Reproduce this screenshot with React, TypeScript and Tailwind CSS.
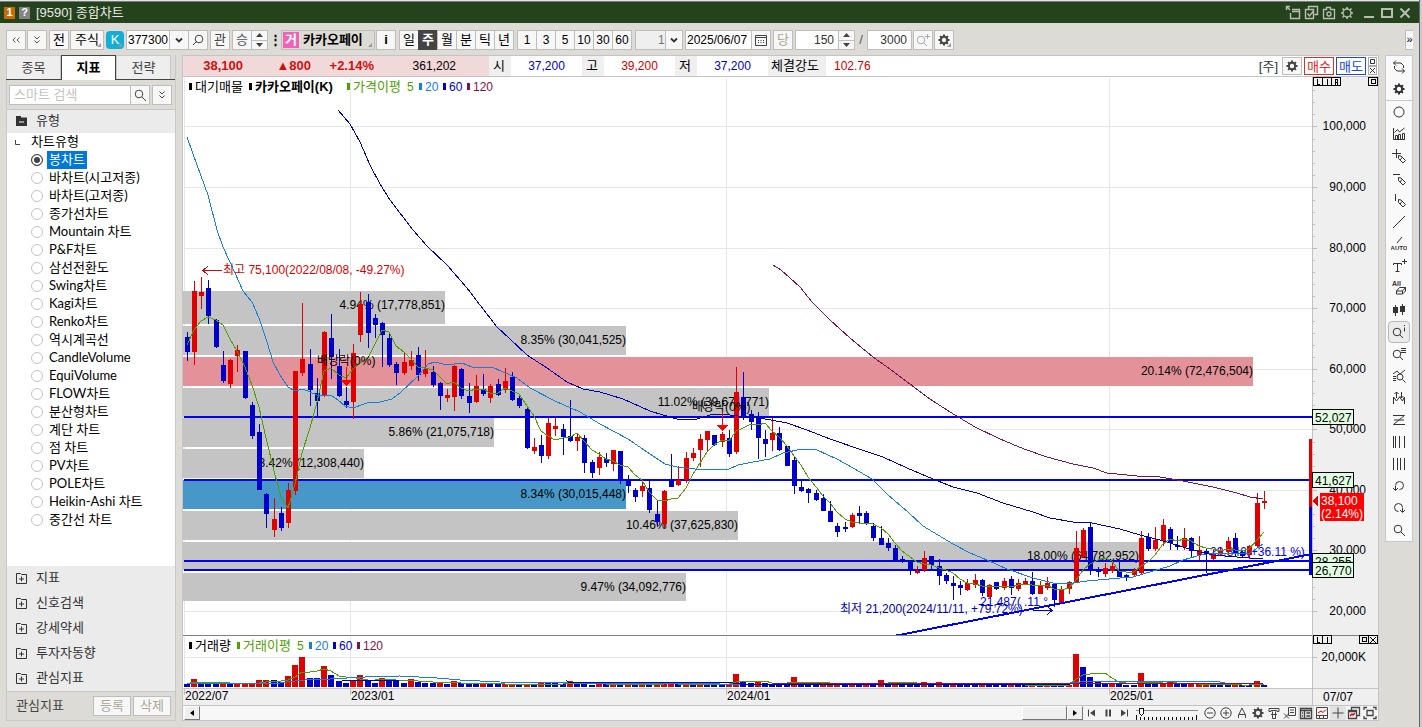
import React from "react";

type Candle = [number, number, number, number, number];

// index-ordered [up, high, bodyTop, bodyBottom, low] in thirds of a unit, grouped by vertical origin
const GROUPS: { base: number; rows: Candle[] }[] = [
  {
    base: 230,
    rows: [
      [0, 306, 321, 366, 392], [1, 153, 183, 366, 405], [1, 141, 186, 198, 237], [0, 150, 174, 258, 282],
      [0, 268, 270, 351, 354], [0, 363, 405, 453, 459], [1, 387, 390, 462, 474], [1, 345, 360, 378, 426],
      [0, 363, 363, 504, 507], [0, 516, 525, 618, 627], [0, 582, 606, 780, 780], [0, 789, 792, 852, 894],
      [1, 804, 867, 900, 921], [0, 831, 849, 894, 903], [1, 759, 780, 879, 894], [1, 423, 423, 783, 795],
      [1, 219, 387, 429, 438], [0, 357, 402, 480, 528], [0, 444, 489, 513, 558], [1, 303, 306, 495, 501],
      [0, 252, 324, 381, 447], [0, 357, 408, 498, 501], [0, 471, 513, 525, 534], [1, 342, 369, 516, 567],
      [1, 186, 222, 315, 336], [0, 192, 216, 309, 354], [0, 252, 264, 285, 324], [0, 276, 279, 315, 411],
      [0, 309, 324, 405, 411], [0, 396, 402, 429, 465], [1, 366, 396, 429, 435], [1, 363, 390, 408, 420],
      [0, 351, 375, 435, 453], [1, 360, 417, 432, 441], [0, 408, 426, 465, 471], [0, 456, 459, 498, 540],
      [1, 477, 495, 504, 516], [1, 405, 408, 501, 543], [0, 414, 417, 498, 507], [0, 459, 498, 519, 549],
      [1, 435, 468, 516, 519], [0, 432, 477, 492, 498], [1, 462, 468, 504, 519], [0, 447, 462, 495, 498],
    ],
  },
  {
    base: 330,
    rows: [
      [1, 114, 153, 180, 189], [0, 126, 141, 210, 213], [0, 192, 204, 228, 234], [0, 228, 237, 354, 357],
      [1, 324, 351, 363, 372], [0, 315, 345, 378, 399], [1, 264, 279, 378, 387], [1, 264, 288, 297, 318],
      [0, 282, 297, 321, 375], [0, 210, 318, 333, 336], [1, 309, 321, 333, 363], [0, 315, 324, 399, 429],
      [0, 390, 396, 429, 444], [1, 366, 381, 414, 435], [0, 369, 387, 399, 411], [1, 360, 360, 402, 423],
      [0, 363, 363, 450, 462], [0, 435, 450, 468, 489], [0, 474, 480, 501, 516], [1, 453, 468, 483, 501],
      [0, 453, 474, 540, 549], [0, 513, 552, 576, 591], [1, 480, 483, 582, 594], [0, 372, 450, 471, 471],
      [1, 408, 450, 465, 468], [1, 366, 384, 450, 459], [1, 354, 369, 384, 393], [1, 312, 327, 360, 411],
      [1, 303, 303, 330, 366], [0, 315, 315, 345, 348], [1, 306, 312, 336, 351], [0, 300, 324, 372, 381],
      [1, 111, 186, 366, 372], [0, 126, 201, 261, 270], [0, 240, 252, 276, 300], [0, 246, 261, 324, 387],
      [0, 300, 327, 342, 381], [1, 264, 309, 330, 363], [0, 291, 309, 360, 363], [0, 348, 348, 408, 408],
      [0, 381, 390, 468, 492], [0, 450, 471, 483, 486], [0, 474, 477, 489, 519], [0, 480, 489, 510, 513],
      [0, 492, 504, 543, 543],
    ],
  },
  {
    base: 450,
    rows: [
      [0, 153, 183, 216, 216], [0, 219, 228, 246, 261], [0, 216, 231, 237, 246], [1, 189, 195, 231, 234],
      [0, 168, 189, 198, 219], [0, 183, 189, 222, 225], [0, 219, 228, 264, 273], [0, 228, 264, 285, 285],
      [0, 264, 279, 294, 303], [0, 285, 294, 330, 333], [0, 318, 327, 336, 339], [0, 333, 333, 360, 375],
      [1, 348, 363, 367, 372], [1, 303, 324, 360, 366], [0, 318, 318, 345, 357], [0, 327, 348, 378, 405],
      [0, 369, 375, 393, 402], [0, 378, 399, 408, 450], [0, 393, 405, 414, 435], [1, 387, 399, 420, 423],
      [1, 372, 390, 405, 414], [0, 387, 390, 429, 438], [1, 402, 405, 441, 441], [0, 396, 396, 417, 420],
      [1, 384, 393, 414, 420], [0, 378, 387, 414, 435], [1, 387, 399, 417, 423], [1, 384, 393, 402, 405],
      [0, 366, 393, 432, 435], [1, 393, 408, 432, 432], [1, 381, 399, 414, 420], [0, 402, 402, 450, 471],
      [1, 408, 417, 459, 459], [1, 393, 396, 417, 432], [1, 243, 294, 396, 399], [1, 234, 240, 321, 324],
      [0, 219, 231, 360, 375], [0, 351, 360, 366, 381], [1, 339, 354, 372, 381], [1, 339, 348, 363, 369],
    ],
  },
  {
    base: 430,
    rows: [
      [0, 396, 420, 441, 441], [0, 432, 435, 441, 453], [1, 414, 420, 435, 441], [1, 303, 324, 429, 432],
      [0, 309, 321, 357, 363], [1, 291, 330, 357, 363], [1, 267, 285, 333, 348], [0, 291, 297, 339, 360],
      [0, 318, 345, 351, 360], [1, 294, 324, 351, 360], [0, 321, 324, 363, 381], [1, 318, 360, 375, 390],
      [0, 357, 363, 366, 429], [1, 360, 369, 387, 390], [1, 354, 360, 372, 378], [1, 321, 333, 366, 372],
      [0, 309, 324, 369, 378], [0, 363, 366, 378, 384], [1, 345, 348, 375, 387], [1, 189, 219, 348, 351],
      [1, 183, 213, 219, 237],
    ],
  },
];

const CANDLES = GROUPS.flatMap((g) =>
  g.rows.map(([up, h, t, b, l]) => ({
    up: up === 1,
    h: Math.round(g.base + h / 3),
    t: Math.round(g.base + t / 3),
    b: Math.round(g.base + b / 3),
    l: Math.round(g.base + l / 3),
  }))
);
const cx = (i: number) => Math.floor(187.3 + 7.228 * i);

const VOLUME: number[] = [
  3, 8, 4.3, 4.2, 3, 4, 3, 3.6, 3.8, 4, 7, 7.1, 7, 5, 11, 22, 30, 9, 8.9, 21, 12, 6, 4, 7, 12, 7, 4, 9.5, 7, 6,
  4, 8, 5.5, 4.5, 4, 5, 3.5, 6, 4, 3.9, 3.8, 4.5, 3, 2.8, 3, 3.1, 2.6, 3.2, 2.5, 4, 3.8, 3.6, 3.2, 6, 4, 3.8, 2.5, 3.5,
  2.6, 2.7, 2.6, 2.8, 2.7, 3.2, 3, 3.4, 3.5, 4.8, 2.7, 3, 2.9, 3.1, 3, 2.8, 2.7, 3.3, 13, 6, 4, 5, 3.6, 3.2, 3, 2.9,
  10, 5, 4.5, 2.6, 3, 3.2, 3.4, 2.8, 3.9, 3.2, 3.8, 3.6, 7, 4.5, 5, 4.4, 4, 3.9, 5, 4, 5, 3, 4, 3.6, 3.4, 2, 3,
  2.6, 2.5, 2.4, 3, 2.2, 2, 2.3, 2.1, 2.4, 2.2, 2, 2.5, 33, 20, 10, 5.6, 3.6, 3.9, 3, 2, 1.9, 14, 4, 3, 4, 5,
  3, 2.6, 3.2, 3.4, 3.6, 3, 2, 1.9, 2.5, 2, 1.9, 6, 2,
];

const avg = (a: number[]) => a.reduce((s, v) => s + v, 0) / a.length;
const CLOSES = CANDLES.map((c) => (c.up ? c.t : c.b));
const MA5 = "187,345 194,330 201,321 208,317 " +
  CLOSES.map((_, i) => (i < 4 ? "" : `${cx(i)},${Math.round(avg(CLOSES.slice(i - 4, i + 1)))}`)).join(" ");
const VMA5 = VOLUME.map((_, i) => `${cx(i)},${Math.round(687 - avg(VOLUME.slice(Math.max(0, i - 4), i + 1)))}`).join(" ");

const MA20 =
  "187,137 197,165 208,195 217,230 223,247 235,273 243,291 252,302 259,318 267,342 273,362 280,375 288,387 295,391 303,389 317,395 332,396 338,400 345,406 353,408 367,403 380,402 392,399 400,393 418,376 428,364 435,362 447,365 462,363 472,367 483,368 492,367 503,372 517,378 530,388 555,401 580,412 600,424 628,439 647,452 665,464 677,467 695,469 729,469 738,465 753,462 770,459 783,453 802,449 817,450 828,455 837,459 853,468 872,479 888,495 908,512 923,526 938,535 953,544 970,553 987,560 1007,569 1033,578 1053,583 1067,584 1087,581 1120,578 1133,577 1143,574 1170,566 1183,560 1197,556 1210,553 1250,553 1263,544";
const MA60 =
  "338,110 344,117 350,124 360,142 370,165 380,184 390,200 400,213 413,230 427,246 447,265 467,288 480,305 497,327 510,339 527,355 547,368 567,382 583,389 600,392 623,399 650,411 663,415 677,419 697,419 710,415 723,414 745,417 760,418 787,423 807,430 830,439 862,450 883,457 907,468 933,479 953,487 977,493 1003,503 1033,512 1050,518 1073,522 1092,523 1120,529 1140,535 1160,540 1183,547 1200,552 1213,555 1237,557 1263,559";
const MA120 =
  "773,265 781,270 790,278 800,287 812,302 830,320 850,338 873,357 890,369 910,384 930,399 950,412 975,427 1000,439 1024,449 1047,457 1073,464 1093,468 1107,473 1137,476 1160,477 1183,481 1213,487 1237,493 1250,497 1263,499";

const PROFILE = [
  { y: 291, h: 33, x: 445, label: "4.94% (17,778,851)", fill: "fill-[#c4c4c4]" },
  { y: 326, h: 29, x: 626, label: "8.35% (30,041,525)", fill: "fill-[#c4c4c4]" },
  { y: 357, h: 29, x: 1253, label: "20.14% (72,476,504)", fill: "fill-[#e4929a]" },
  { y: 388, h: 29, x: 769, label: "11.02% (39,671,771)", fill: "fill-[#c4c4c4]" },
  { y: 418, h: 29, x: 494, label: "5.86% (21,075,718)", fill: "fill-[#c4c4c4]" },
  { y: 449, h: 29, x: 364, label: "3.42% (12,308,440)", fill: "fill-[#c4c4c4]" },
  { y: 480, h: 29, x: 626, label: "8.34% (30,015,448)", fill: "fill-[#4798c8]" },
  { y: 511, h: 29, x: 738, label: "10.46% (37,625,830)", fill: "fill-[#c4c4c4]" },
  { y: 542, h: 28, x: 1139, label: "18.00% (64,782,952)", fill: "fill-[#c4c4c4]" },
  { y: 573, h: 28, x: 686, label: "9.47% (34,092,776)", fill: "fill-[#c4c4c4]" },
];

const PRICES: [number, string][] = [
  [126, "100,000"], [187, "90,000"], [248, "80,000"], [308, "70,000"], [369, "60,000"],
  [429, "50,000"], [490, "40,000"], [550, "30,000"], [611, "20,000"],
];
const MONTHS: [number, string][] = [[184, "2022/07"], [350, "2023/01"], [726, "2024/01"], [1109, "2025/01"]];

function Legend({ y, first, name, ma, xs }: { y: number; first: string; name?: string; ma: string; xs: number[] }) {
  const [a, b, c, d, e, f] = xs;
  return (
    <g>
      {[[a, "fill-black"], [c, "fill-[#4f9f00]"], [d, "fill-[#1480d8]"], [e, "fill-[#0000c8]"], [f, "fill-[#7d1350]"]].map(([x, k]) => (
        <rect key={String(x)} x={Number(x)} y={y - 8} width="3" height="7" className={String(k)} />
      ))}
      <text x={a + 6} y={y} className="text-[13px] fill-black">{first}</text>
      {name && (
        <>
          <rect x={b} y={y - 8} width="3" height="7" />
          <text x={b + 6} y={y} className="text-[13px] font-bold fill-black">{name}</text>
        </>
      )}
      <text x={c + 6} y={y} className="text-[13px] fill-[#4f9f00]">{ma}</text>
      <text x={d - 12} y={y} className="fill-[#4f9f00]">5</text>
      <text x={d + 6} y={y} className="fill-[#1480d8]">20</text>
      <text x={e + 6} y={y} className="fill-[#0000c8]">60</text>
      <text x={f + 6} y={y} className="fill-[#7d1350]">120</text>
    </g>
  );
}

const TAG_PATHS: Record<string, string> = {
  L: "M4 2v5h3",
  I: "M5 2v6",
  R: "M4 8V2.5h2.5v2.5H4M6.5 5v3",
  box: "M3 2.5h4v4H3z",
  x: "M2 2l6 6M8 2L2 8",
};
function AxisTag({ x, y, kind }: { x: number; y: number; kind: string }) {
  return (
    <g fill="none" stroke="black">
      <rect x={x + 0.5} y={y + 0.5} width="9" height="8" fill="#efefef" />
      <g transform={`translate(${x} ${y})`}><path d={TAG_PATHS[kind]} /></g>
    </g>
  );
}

function PriceTag({ y, label }: { y: number; label: string }) {
  return (
    <g>
      <rect x="1312.5" y={y - 7.5} width="41" height="15" fill="#e2ffe2" stroke="black" />
      <text x="1315" y={y + 5} className="fill-black">{label}</text>
    </g>
  );
}

function Chart() {
  return (
    <svg
      viewBox="183 77 1195 628"
      className="block h-auto w-full font-['Liberation_Sans','Noto_Sans_CJK_KR',sans-serif] text-[12px]"
      shapeRendering="crispEdges"
      role="img"
      aria-label="카카오페이 주봉 차트"
    >
      <defs>
        <clipPath id="plot"><rect x="183" y="77" width="1129" height="558" /></clipPath>
      </defs>
      <rect x="183" y="77" width="1195" height="628" fill="white" />
      <rect x="1312" y="77" width="66" height="628" fill="#efefef" />
      <rect x="183" y="688" width="1195" height="17" fill="#efefef" />
      {PRICES.map(([y]) => <rect key={y} x="184" y={y} width="1128" height="1" fill="#e6e6e6" />)}
      <rect x="184" y="657" width="1128" height="1" fill="#e6e6e6" />
      {MONTHS.map(([x]) => (
        <g key={x} fill="#e6e6e6">
          <rect x={x} y="78" width="1" height="555" />
          <rect x={x} y="637" width="1" height="50" />
        </g>
      ))}
      {PROFILE.map((p) => (
        <g key={p.y}>
          <rect x="183" y={p.y} width={p.x - 183} height={p.h} className={p.fill} />
          <text x={p.x} y={p.y + 18} textAnchor="end" className="fill-black">{p.label}</text>
        </g>
      ))}
      <g fill="#0000f8">
        {[416, 479, 560, 569].map((y) => <rect key={y} x="184" y={y} width="1128" height="2" />)}
      </g>
      <text x="223" y="274" className="fill-[#d80000]">최고 75,100(2022/08/08, -49.27%)</text>
      <path d="M222 270.5H203M208 266l-5 4.5 5 4.5" fill="none" stroke="#d80000" />
      <text x="840" y="613" className="fill-[#0000b4]">최저 21,200(2024/11/11, +79.72%)</text>
      <path d="M1033 610.5h19M1047 606l5 4.5-5 4.5" fill="none" stroke="#0000b4" />
      <text x="980" y="606" className="fill-[#0000c8]">21,487( .11 °</text>
      <text x="1210" y="556" className="fill-[#0000f0]">29,846(+36.11 %)</text>
      {CANDLES.map((c, i) => (
        <g key={i} fill={c.up ? "#e00000" : "#0000c8"}>
          <rect x={cx(i)} y={c.h} width="1" height={Math.max(1, c.l - c.h)} />
          <rect x={cx(i) - 2} y={c.t} width="5" height={Math.max(2, c.b - c.t)} />
        </g>
      ))}
      <g fill="none" strokeWidth="1" clipPath="url(#plot)">
        <polyline points={MA5} stroke="#4f9f00" />
        <polyline points={MA20} stroke="#1480d8" />
        <polyline points={MA60} stroke="#0000b8" />
        <polyline points={MA120} stroke="#7d1350" />
        <path d="M894 636L1312 554" stroke="#0000f8" strokeWidth="2" />
      </g>
      {[[317, 365, 346, 367, 380], [692, 411, 722, 412, 425]].map(([tx, ty, x, y1, y2]) => (
        <g key={tx}>
          <text x={tx} y={ty} className="fill-black">배당락(0%)</text>
          <path d={`M${x} ${y1}h1V${y2}h5l-5 6h-1l-5-6h5z`} fill="#ff0000" />
        </g>
      ))}
      <rect x="1309" y="439" width="3" height="68" fill="#e00000" />
      <rect x="1309" y="507" width="3" height="68" fill="#0000d8" />
      <Legend y={91} first="대기매물" name="카카오페이(K)" ma="가격이평" xs={[189, 249, 347, 419, 443, 467]} />

      <rect x="183" y="635" width="1195" height="1" fill="#808080" />
      {VOLUME.map((v, i) => (
        <rect
          key={i}
          x={cx(i) - 3}
          y={Math.round(687 - v)}
          width="6"
          height={687 - Math.round(687 - v)}
          fill={i > 0 && v > VOLUME[i - 1] ? "#e00000" : "#0000c8"}
        />
      ))}
      <g fill="none">
        <polyline points={VMA5} stroke="#4f9f00" />
        <polyline points="187,683 280,683 295,681 305,680 330,679 365,677 400,676 437,678 460,680 500,682 580,683 720,684 820,685 900,684 1000,684 1070,683 1090,681 1140,681 1215,681 1225,683 1263,683" stroke="#1480d8" />
        <polyline points="342,681 400,680 566,680 568,682 726,682 740,684 1070,684 1090,683 1263,683" stroke="#0000b8" />
        <polyline points="773,684 900,683 1263,683" stroke="#7d1350" />
      </g>
      <Legend y={650} first="거래량" ma="거래이평" xs={[189, 0, 237, 309, 333, 357]} />
      <rect x="183" y="688" width="1195" height="1" fill="#c4c4c4" />
      <rect x="1312" y="77" width="1" height="628" fill="#c0c0c0" />

      {PRICES.map(([y, t]) => (
        <g key={y}>
          <rect x="1312" y={y} width="5" height="1" fill="#bdbdbd" />
          {[12, 24, 36, 48].map((d) => <rect key={d} x="1312" y={y - d} width="3" height="1" fill="#bdbdbd" />)}
          <text x="1366" y={y + 4} textAnchor="end" className="fill-black">{t}</text>
        </g>
      ))}
      <rect x="1312" y="657" width="5" height="1" fill="#bdbdbd" />
      <text x="1366" y="661" textAnchor="end" className="fill-black">20,000K</text>
      <PriceTag y={417} label="52,027" />
      <PriceTag y={480} label="41,627" />
      <PriceTag y={561} label="28,255" />
      <PriceTag y={570} label="26,770" />
      <path d="M1312 501l6-6v12z" fill="#e00000" />
      <rect x="1320" y="493" width="44" height="28" fill="#ff0000" />
      <text x="1321" y="505" className="fill-white">38,100</text>
      <text x="1321" y="518" className="fill-white">(2.14%)</text>
      <AxisTag x={1313} y={77} kind="L" />
      <AxisTag x={1322} y={77} kind="I" />
      <AxisTag x={1331} y={77} kind="R" />
      <AxisTag x={1368} y={77} kind="box" />
      <AxisTag x={1313} y={635} kind="L" />
      <AxisTag x={1322} y={635} kind="I" />
      <AxisTag x={1359} y={635} kind="box" />
      <AxisTag x={1368} y={635} kind="x" />
      {MONTHS.map(([x, t]) => (
        <g key={x}>
          <rect x={x} y="688" width="1" height="7" fill="#bdbdbd" />
          <text x={x + 1} y="700" className="fill-black">{t}</text>
        </g>
      ))}
      <text x="1323" y="701" className="fill-black">07/07</text>
    </svg>
  );
}

/* ---------- icons, 16 x 16 grid ---------- */
function Ic({ d, f, w = 1, children }: { d?: string; f?: string; w?: number; children?: React.ReactNode }) {
  return (
    <svg viewBox="0 0 16 16" className="size-4 shrink-0" fill="none" stroke="currentColor" strokeWidth={w} aria-hidden="true">
      {d && <path d={d} />}
      {f && <path d={f} fill="currentColor" stroke="none" />}
      {children}
    </svg>
  );
}
const Gear = () => (
  <svg viewBox="0 0 16 16" className="size-4 shrink-0" fill="none" stroke="currentColor" aria-hidden="true">
    <path d="M8 2.5v2M8 11.5v2M2.5 8h2M11.5 8h2M4.1 4.1l1.4 1.4M10.5 10.5l1.4 1.4M11.9 4.1l-1.4 1.4M5.5 10.5l-1.4 1.4" strokeWidth="2" />
    <circle cx="8" cy="8" r="3.2" strokeWidth="2" />
  </svg>
);
const Sun = () => (
  <svg viewBox="0 0 16 16" className="size-4 shrink-0" fill="none" stroke="currentColor" aria-hidden="true">
    <path d="M8 2v2M8 12v2M2 8h2M12 8h2M3.5 3.5l1.5 1.5M11 11l1.5 1.5M12.5 3.5L11 5M5 11l-1.5 1.5" strokeWidth="1.6" />
    <circle cx="8" cy="8" r="4" strokeWidth="1.4" />
  </svg>
);
const Lens = ({ extra }: { extra?: string }) => (
  <Ic d={extra}>
    <circle cx={extra ? 6 : 7} cy={extra ? 8 : 7} r="3.8" />
    <path d={extra ? "M9 11l3 3" : "M10 10l4 4"} />
  </Ic>
);
const Dbl = () => <Ic d="M5.5 4.5L8 7l2.5-2.5M5.5 8.5L8 11l2.5-2.5" />;
const PENCIL = "M7.5 7.5v3l4.5 4.5 2.5-2.5L10 8zM9 12l2.5-3";

const TOOLS: { name: string; icon: React.ReactNode }[] = [
  { name: "원", icon: <Ic><circle cx="8" cy="8" r="5" /></Ic> },
  { name: "지표 차트", icon: <Ic d="M2.5 2v11.5H14M4.5 13V9.5h2V13M7.5 13V8.5h2V13M11.5 13V7.5h2V13M3.5 6.5l3-3 2 2.5 5-4" /> },
  { name: "십자선", icon: <Ic d={"M5.5 1v9M1 5.5h9" + PENCIL} /> },
  { name: "수평선", icon: <Ic d={"M2 4.5h7" + PENCIL} /> },
  { name: "수직선", icon: <Ic d={"M4.5 2v7" + PENCIL} /> },
  { name: "추세선", icon: <Ic d="M2 14L14 2" /> },
  {
    name: "자동 추세선",
    icon: (
      <Ic d="M6 7l5-6">
        <text x="8" y="14" textAnchor="middle" fill="currentColor" stroke="none" className="text-[6px] font-bold">AUTO</text>
      </Ic>
    ),
  },
  { name: "문자", icon: <Ic d="M2.5 7V5.5h8V7M6.5 5.5v8M4.5 13.5h4M13.5 1v5M11 3.5h5" /> },
  {
    name: "전체 지우기",
    icon: (
      <Ic d="M5.5 11l3-3.5h6L11.5 11zM5.5 11v3h6v-3M11.5 14l3-3V7.5">
        <text x="1" y="6" fill="currentColor" stroke="none" className="text-[7px] font-bold">All</text>
      </Ic>
    ),
  },
  { name: "봉", icon: <Ic d="M4.5 3v11M11.5 2v11" f="M2 5h5v6H2zM9 4h5v6H9z" /> },
  { name: "정보 돋보기", icon: <Lens extra="M13.5 1v1M13.5 3.5v4" /> },
  { name: "목록 돋보기", icon: <Lens extra="M10 2.5h5M10 4.5h5M10 6.5h5" /> },
  { name: "차트 돋보기", icon: <Ic d="M2 6l4-3 3 3 5-4M2 8.5h3M2 10.5h3M2 12.5h3M11.5 11.5l3 3M12 9a3 3 0 1 0-6 0 3 3 0 0 0 6 0" /> },
  { name: "신호", icon: <Ic d="M2.5 14V7l3 4 3-4 3 4 2-4v7M5.5 8V2M3.5 4l2-2 2 2M10.5 2v6M8.5 6l2 2 2-2" /> },
  { name: "지그재그", icon: <Ic d="M2 3.5h11.5L2.5 12.5H14M3 8h10" /> },
  { name: "피보나치 시간대", icon: <Ic d="M2.5 2v12M4.5 2v12M8.5 2v12M13.5 2v12" /> },
  { name: "등간격선", icon: <Ic d="M2.5 2v12M6.5 2v12M9.5 2v12M13.5 2v12" /> },
  { name: "되돌리기", icon: <Ic d="M4.5 7.5a4 4 0 1 1 4 4M2 10l2.5 2.5L7 10M4.5 12V8" /> },
  { name: "다시 실행", icon: <Ic d="M11.5 7.5a4 4 0 1 0-4 4M9 10l2.5 2.5L14 10M11.5 12V8" /> },
  { name: "확대", icon: <Lens /> },
];

const BTN = "flex h-5 shrink-0 items-center justify-center border border-[#bdbdb9] bg-[#f7f7f7]";
function B({ w, label, children, c = "" }: { w: string; label?: string; children: React.ReactNode; c?: string }) {
  return <button type="button" aria-label={label} className={`${BTN} ${w} ${c}`}>{children}</button>;
}
function Spinner() {
  return (
    <div className="flex w-4 shrink-0 flex-col border border-l-0 border-[#bdbdb9] bg-[#f7f7f7] text-[#444]">
      <button type="button" aria-label="증가" className="flex h-[9px] items-center justify-center">
        <svg viewBox="0 0 7 4" className="h-1 w-[7px]"><path d="M0 4L3.5 0 7 4z" fill="currentColor" /></svg>
      </button>
      <button type="button" aria-label="감소" className="flex h-[9px] items-center justify-center border-t border-[#bdbdb9]">
        <svg viewBox="0 0 7 4" className="h-1 w-[7px]"><path d="M0 0L3.5 4 7 0z" fill="currentColor" /></svg>
      </button>
    </div>
  );
}
const Corner = () => (
  <svg viewBox="0 0 4 4" className="absolute right-0.5 bottom-0.5 size-1" aria-hidden="true"><path d="M4 0v4H0z" fill="#999" /></svg>
);
const Down = () => <Ic d="M5 6.5L8 9.5l3-3" w={1.8} />;

function TopBar() {
  return (
    <div className="flex h-8 items-center pt-px pl-1.5 text-[13px] leading-none">
      <B w="w-5" label="접기" c="text-[#555]"><span className="rotate-90"><Dbl /></span></B>
      <B w="w-5" c="ml-px text-[#555]" label="더보기"><Dbl /></B>
      <B w="w-5" c="ml-0.5">전</B>
      <B w="w-[34px]" c="relative ml-px">주식<Corner /></B>
      <button type="button" className="relative ml-0.5 flex size-[18px] shrink-0 items-center justify-center rounded-sm bg-[#12aed4] text-white">K<Corner /></button>
      <input aria-label="종목코드" defaultValue="377300" className="ml-0.5 h-5 w-11 shrink-0 border border-[#bdbdb9] bg-white pl-px text-xs" />
      <B w="w-5" c="-ml-px text-[#333]" label="종목 목록"><Down /></B>
      <B w="w-5" c="-ml-px text-[#444]" label="종목 검색"><Ic d="M6.5 9.5L3 13"><circle cx="9" cy="7" r="3.8" /></Ic></B>
      <B w="w-5" c="ml-0.5 text-[#444]">관</B>
      <B w="w-5" c="ml-0.5 text-[#555]">승</B>
      <Spinner />
      <div className="ml-px w-2 text-center font-bold">⋮</div>
      <button type="button" className="relative ml-1 flex h-5 w-[94px] shrink-0 items-center border border-[#bdbdb9] bg-[#dddbd5] pl-px font-bold">
        <span className="mr-1 flex size-4 items-center justify-center bg-[#f062b8] text-white">거</span>카카오페이<Corner />
      </button>
      <B w="w-5" c="ml-px font-bold">i</B>
      <div className="ml-[3px] flex">
        {["일", "주", "월", "분", "틱", "년"].map((t) => (
          <button key={t} type="button" className={`-mr-px flex h-5 w-5 shrink-0 items-center justify-center border ${t === "주" ? "border-[#444] bg-[#444] font-bold text-white" : "border-[#bdbdb9] bg-[#f7f7f7]"}`}>{t}</button>
        ))}
      </div>
      <div className="ml-[3px] flex pl-px text-xs">
        {["1", "3", "5", "10", "30", "60"].map((t) => <B key={t} w="w-5" c="-mr-px">{t}</B>)}
      </div>
      <div className="relative ml-1 h-5 w-12 shrink-0">
        <select aria-label="주기" disabled className="h-5 w-full appearance-none border border-[#bdbdb9] bg-[#efefef] pl-[22px] text-xs text-[#777] opacity-100"><option>1</option></select>
        <span className="pointer-events-none absolute top-px right-px flex h-[18px] w-[17px] items-center border-l border-[#bdbdb9] bg-[#f7f7f7] text-[#333]"><Down /></span>
      </div>
      <input aria-label="날짜" defaultValue="2025/06/07" className="ml-0.5 h-5 w-[67px] shrink-0 border border-[#bdbdb9] bg-white pl-px text-xs" />
      <B w="w-5" c="-ml-px text-[#444]" label="달력"><Ic d="M2.5 3.5h11v10h-11zM2.5 5.5h11M5 8.5h1M7.5 8.5h1M10 8.5h1M5 10.5h1M7.5 10.5h1M10 10.5h1" /></B>
      <B w="w-5" c="ml-0.5 text-[#aaa796]">당</B>
      <input aria-label="표시 봉 수" defaultValue="150" className="ml-0.5 h-5 w-11 shrink-0 border border-[#bdbdb9] bg-white pr-1 text-right text-xs text-[#333]" />
      <Spinner />
      <span className="w-3 text-center text-[#555]">/</span>
      <input aria-label="전체 봉 수" defaultValue="3000" className="h-5 w-[45px] shrink-0 border border-[#bdbdb9] bg-white pr-1 text-right text-xs text-[#333]" />
      <B w="w-5" c="ml-px text-[#aaa]" label="확대"><Lens extra="M12.5 2v5M10 4.5h5" /></B>
      <B w="w-5" c="relative ml-px text-[#444]" label="설정"><Gear /><Corner /></B>
      <button type="button" aria-label="펼치기" className="mr-1.5 ml-auto flex h-5 w-2 items-center justify-center border border-r-0 border-[#bdbdb9] bg-[#f7f7f7] text-[11px]">»</button>
    </div>
  );
}

const TYPES = [
  "봉차트", "바차트(시고저종)", "바차트(고저종)", "종가선차트", "Mountain 차트", "P&F차트", "삼선전환도", "Swing차트", "Kagi차트", "Renko차트",
  "역시계곡선", "CandleVolume", "EquiVolume", "FLOW차트", "분산형차트", "계단 차트", "점 차트", "PV차트", "POLE차트", "Heikin-Ashi 차트", "중간선 차트",
];

function Sidebar() {
  return (
    <aside className="flex w-[170px] shrink-0 flex-col border-r border-[#c8c8c8] text-[13px]">
      <div className="flex h-[25px] shrink-0 border-b border-[#444]" role="tablist">
        {["종목", "지표", "전략"].map((t) => (
          <button key={t} type="button" role="tab" aria-selected={t === "지표"}
            className={`w-[55px] border border-b-0 ${t === "지표" ? "-mb-px border-[#444] bg-white font-bold" : "border-[#c8c8c8] bg-[#eee] text-[#444]"}`}>{t}</button>
        ))}
      </div>
      <div className="flex h-[29px] shrink-0 items-center border-l border-[#c8c8c8] pl-0.5">
        <input aria-label="스마트 검색" placeholder="스마트 검색" className="h-5 w-[122px] border border-[#bdbdb9] bg-white pl-1 placeholder:text-[#c4c4c4]" />
        <B w="w-5" c="-ml-px text-[#444]" label="검색"><Lens /></B>
        <B w="w-5" c="ml-0.5 text-[#444]" label="더보기"><Dbl /></B>
      </div>
      <button type="button" className="flex h-6 shrink-0 items-center gap-1.5 border-t border-l border-[#c8c8c8] bg-[#ebebeb] pb-0.5 pl-[7px] text-[#333]">
        <svg viewBox="0 0 16 16" className="size-4" aria-hidden="true"><path d="M2 3h5v1.5h6V13H2z" fill="#333" /><path d="M5 9h5" stroke="white" /></svg>
        유형
      </button>
      <div className="flex-1 border-l border-[#c8c8c8] bg-white font-[Lato,'Noto_Sans_CJK_KR',sans-serif]">
        <div className="flex h-[18px] items-center pl-2">
          <svg viewBox="0 0 5 5" className="size-[5px]" aria-hidden="true"><path d="M.5 0v4.5H5" fill="none" stroke="#444" /></svg>
          <span className="ml-[11px]">차트유형</span>
        </div>
        {TYPES.map((t, i) => (
          <label key={t} className="flex h-[18px] items-center pl-6">
            <input type="radio" name="type" defaultChecked={i === 0}
              className="size-3 appearance-none rounded-full border border-[#c4c4c4] bg-white checked:border-[#444] checked:bg-[#444] checked:shadow-[inset_0_0_0_2px_white]" />
            <span className={`ml-1 flex h-[18px] items-center px-0.5 whitespace-nowrap ${i === 0 ? "bg-[#0078d7] text-white" : "text-black"}`}>{t}</span>
          </label>
        ))}
      </div>
      <div className="shrink-0 border-l border-[#c8c8c8] bg-[#ebebeb]">
        {["지표", "신호검색", "강세약세", "투자자동향", "관심지표"].map((t) => (
          <button key={t} type="button" className="flex h-[25px] w-full items-center gap-1.5 pb-0.5 pl-[7px] text-[#333]">
            <Ic d="M2.5 3.5h4l1 1h5v9h-10zM5 9h5M7.5 6.5v5" />{t}
          </button>
        ))}
      </div>
      <div className="flex h-[30px] shrink-0 items-center gap-0.5 border-y border-l border-[#c8c8c8] pr-1 pl-[9px] text-[#444]">
        <span className="mr-auto">관심지표</span>
        <B w="w-[38px]" c="text-[#aaa796]">등록</B>
        <B w="w-[38px]" c="text-[#aaa796]">삭제</B>
      </div>
    </aside>
  );
}

function Quote() {
  const cells: [string, string, string][] = [["시", "37,200", "text-[#0000c0]"], ["고", "39,200", "text-[#d00000]"], ["저", "37,200", "text-[#0000c0]"]];
  return (
    <div className="flex h-[21px] items-stretch border-b border-[#c4c4c4] bg-white text-xs leading-5">
      <div className="flex w-[306px] shrink-0 bg-[#f1d8d9] text-[13px] font-bold text-[#d01010]">
        <span className="w-[60px] text-right">38,100</span>
        <span className="w-[68px] text-right">▲800</span>
        <span className="w-[63px] text-right">+2.14%</span>
        <span className="w-[82px] text-right text-xs leading-5 font-normal text-black">361,202</span>
      </div>
      {cells.map(([k, v, c]) => (
        <React.Fragment key={k}>
          <span className="w-[22px] shrink-0 bg-[#efefef] pl-1 text-[13px] text-black">{k}</span>
          <span className={`w-[71px] shrink-0 text-center ${c}`}>{v}</span>
        </React.Fragment>
      ))}
      <span className="w-[58px] shrink-0 bg-[#efefef] pl-[3px] text-[13px]">체결강도</span>
      <span className="pl-2 text-[#d00000]">102.76</span>
      <div className="ml-auto flex items-center gap-0.5 text-[13px] leading-none text-[#333]">
        <span className="mr-0.5">[주]</span>
        <B w="w-5 !h-[18px]" c="text-[#444]" label="설정"><Gear /></B>
        <button type="button" className="h-[18px] w-[30px] border border-[#d83030] text-[#d83030]">매수</button>
        <button type="button" className="h-[18px] w-[30px] border border-[#2048d8] text-[#2048d8]">매도</button>
        <div className="flex w-[10px] flex-col">
          <button type="button" aria-label="최대화" className="flex size-[9px] items-center justify-center border border-[#aaa]"><svg viewBox="0 0 5 5" className="size-[5px]"><path d="M.5.5h4v4h-4z" fill="none" stroke="#333" /></svg></button>
          <button type="button" aria-label="닫기" className="flex size-[9px] items-center justify-center border border-[#aaa]"><svg viewBox="0 0 5 5" className="size-[5px]"><path d="M0 0l5 5M5 0L0 5" fill="none" stroke="#333" /></svg></button>
        </div>
      </div>
    </div>
  );
}

const RAISED = "flex h-[14px] shrink-0 items-center justify-center border border-t-white border-r-[#777] border-b-[#777] border-l-white bg-[#efefef]";
const BOTTOM: { name: string; icon: React.ReactNode; on?: boolean }[] = [
  { name: "축소", icon: <Ic d="M5 8h6"><circle cx="8" cy="8" r="5.2" /></Ic> },
  { name: "확대", icon: <Ic d="M5 8h6M8 5v6"><circle cx="8" cy="8" r="5.2" /></Ic> },
  { name: "글자", icon: <Ic d="M4.5 13V10L8 3l3.5 7v3M5 9.5h6" /> },
  { name: "설정", icon: <Gear /> },
  { name: "도구", icon: <Ic d="M3 3.5h10v3h-2v-1H5v1H3zM6.5 6.5v7h3v-7M5 9.5h6" /> },
  { name: "삭제", icon: <Ic d="M6.5 2.5h7v8h-7zM8 5h4M8 7.5h4M2 8.5l5 5M7 8.5l-5 5" /> },
  { name: "목록", on: true, icon: <Ic d="M2.5 3.5h11v10h-11zM2.5 5.5h11M6.5 5.5v8M4 8h1M4 11h1M8.5 8h3.5M8.5 11h3.5" w={1.3} /> },
  { name: "차트", icon: <Ic d="M2.5 2.5h11v11h-11zM2.5 10.5h11M5.5 10.5v3M9.5 10.5v3"><path d="M4 8l3-2 2 1.5 3-3" stroke="#d00" /></Ic> },
  { name: "십자선", on: true, icon: <Ic d="M8 2.5v11M2.5 8h11" /> },
  { name: "새 창", icon: <Ic d="M5.5 5V2.5h8v8H11M2.5 5.5h8v8h-8zM2.5 6.5h8" w={1.3}><path d="M4 11l2-2 1 1 2-2" stroke="#d00" /></Ic> },
  { name: "전체화면", icon: <Ic d="M2 5V2.5h3M11 2.5h3V5M14 11v2.5h-3M5 13.5H2V11M5 5.5h6v5H5z" w={1.3} /> },
];

function BottomBar() {
  return (
    <div className="box-content flex h-[14px] items-center border-t border-[#c4c4c4] bg-[#f4f4f4] text-[#333]">
      <div className="flex flex-1 bg-[#f7f7f7]">
        <button type="button" aria-label="왼쪽" className={`${RAISED} ml-px w-4`}><svg viewBox="0 0 4 6" className="h-1.5 w-1"><path d="M4 0v6L0 3z" /></svg></button>
        <div className={`${RAISED} ml-auto w-[45px]`} />
        <button type="button" aria-label="오른쪽" className={`${RAISED} w-4`}><svg viewBox="0 0 4 6" className="h-1.5 w-1"><path d="M0 0v6l4-3z" /></svg></button>
      </div>
      <div className="flex shrink-0 items-center pl-px text-[#444]">
        <button type="button" aria-label="처음"><Ic d="M4.5 4.5v7" f="M11 4.5v7L6 8z" /></button>
        <button type="button" aria-label="정지"><Ic d="M6.5 4.5v7M10 4.5v7" w={2} /></button>
        <button type="button" aria-label="끝"><Ic d="M11.5 4.5v7" f="M5 4.5v7L10 8z" /></button>
        <svg viewBox="0 0 62 14" className="mx-1 h-[14px] w-[62px]" aria-hidden="true" shapeRendering="crispEdges">
          <path d="M0 4.5h62" stroke="#888" />
          <path d="M.5 9v5M4.5 11v3M8.5 11v3M12.5 11v3M16.5 11v3M20.5 11v3M24.5 11v3M28.5 11v3M32.5 11v3M36.5 11v3M40.5 11v3M44.5 11v3M48.5 11v3M52.5 11v3M56.5 11v3M60.5 9v5" stroke="#111" />
          <path d="M3.5 2.5h4v5l-2 2-2-2z" fill="white" stroke="#111" />
        </svg>
        {BOTTOM.map((b) => (
          <button key={b.name} type="button" aria-label={b.name} className={`flex h-[14px] w-4 items-center justify-center overflow-hidden ${b.on ? "bg-[#e2e2e2]" : ""}`}>{b.icon}</button>
        ))}
      </div>
    </div>
  );
}

export default function App() {
  return (
    <div className="min-h-screen bg-[#c9cbd2] pr-0.5 font-['Liberation_Sans','Noto_Sans_CJK_KR',sans-serif] text-black">
      <div className="flex min-h-screen flex-col border-r border-[#66666c] bg-[#dddbd5]">
        <div className="h-0.5 shrink-0 border-b border-[#777c78] bg-[#e4e4ea]" />
        <header className="flex h-[21px] shrink-0 items-center bg-[#24431c] pr-1.5 pl-1 text-[#b9bdb4]">
          <span className="flex h-3 w-[11px] items-center justify-center bg-[#c86c00] text-[11px] font-bold text-white">1</span>
          <span className="ml-1 flex h-3 w-[11px] items-center justify-center bg-[#848484] text-[11px] font-bold text-white">?</span>
          <h1 className="ml-1.5 text-[13px] leading-none text-[#e8e8e8]">[9590] 종합차트</h1>
          <div className="ml-auto flex items-center gap-0.5">
            <button type="button" aria-label="창 분리"><Ic d="M5.5 8v5.5h9v-9H7M7 6.5h7.5M1.5 1.5L5 5M1.5 5V1.5H5" w={1.4} /></button>
            <button type="button" aria-label="저장"><Ic d="M5.5 4.5v-3h9v8h-3M2.5 4.5h8v9h-8zM4.5 8.5l2 2.5 4-5" w={1.4} /></button>
            <button type="button" aria-label="화면 캡처"><Ic d="M2.5 4.5h3v-2h4v2h4v9h-11z" w={1.3}><circle cx="8" cy="9" r="2" /></Ic></button>
            <button type="button" aria-label="환경설정"><Sun /></button>
            <button type="button" aria-label="최소화" className="ml-1"><Ic d="M3 12h10" w={2} /></button>
            <button type="button" aria-label="최대화"><Ic d="M3 4h10v8H3z" w={2} /></button>
            <button type="button" aria-label="닫기"><Ic d="M3.5 3.5l9 9M12.5 3.5l-9 9" w={2} /></button>
          </div>
        </header>
        <TopBar />
        <div className="flex items-stretch gap-1.5 px-1.5">
          <Sidebar />
          <main className="flex min-w-0 flex-1 flex-col border border-[#c4c4c4]">
            <Quote />
            <Chart />
            <BottomBar />
          </main>
          <nav aria-label="그리기 도구" className="flex w-7 shrink-0 flex-col self-start border border-[#c8c8c8] bg-[#f9f9f9] text-[#333]">
            <button type="button" aria-label="새로고침" className="flex h-[22px] items-center justify-center"><Ic d="M5 1.5L2.5 4 5 6.5M2.5 4H10l2.5 2.5V9M11 14.5l2.5-2.5L11 9.5M13.5 12H6L3.5 9.5V7" /></button>
            <button type="button" aria-label="설정" className="flex h-[23px] items-center justify-center border-b border-[#c8c8c8]"><Gear /></button>
            {TOOLS.map((t, i) => (
              <button key={t.name} type="button" aria-label={t.name}
                className={`flex h-[22px] items-center justify-center ${i === 10 ? "mx-0.5 rounded-sm border border-[#b8b8b8] bg-[#ececec]" : ""}`}>{t.icon}</button>
            ))}
          </nav>
        </div>
      </div>
    </div>
  );
}
